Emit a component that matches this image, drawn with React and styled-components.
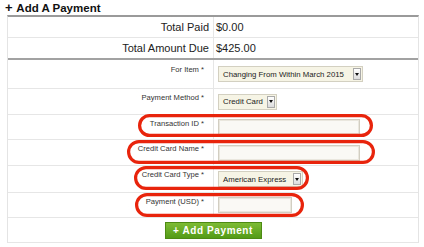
import React from 'react';
import styled, { createGlobalStyle } from 'styled-components';

const Global = createGlobalStyle`
  html, body { margin: 0; padding: 0; background: #fff; }
  body { font-family: "Liberation Sans", Arial, Helvetica, sans-serif; color: #222; }
`;

const Page = styled.div`
  position: relative;
  width: 424px;
  height: 247px;
  overflow: hidden;
`;

const Title = styled.h3`
  margin: 0;
  padding-left: 5px;
  height: 15px;
  font-size: 11.5px;
  font-weight: bold;
  line-height: 15px;
  color: #111;
`;

const Plus = styled.span`
  font-size: 13px;
  font-weight: 900;
  margin-right: 1px;
`;

const Panel = styled.div`
  margin-left: 7px;
  width: 412px;
  box-sizing: border-box;
  border-top: 2px solid #9a9a9a;
  border-left: 1px solid #e4e4e4;
  border-right: 1px solid #e4e4e4;
`;

const Row = styled.div`
  display: grid;
  grid-template-columns: 206px 1fr;
  height: ${p => p.h}px;
  box-sizing: border-box;
  border-bottom: ${p => (p.thick ? '2px solid #a2a2a2' : '1px solid #e6e6e6')};
`;

const TotalLabel = styled.div`
  box-sizing: border-box;
  border-right: 1px solid #e6e6e6;
  display: flex;
  align-items: center;
  justify-content: flex-end;
  padding-right: 4px;
  font-size: 11px;
  color: #222;
`;

const TotalValue = styled.div`
  display: flex;
  align-items: center;
  padding-left: 2px;
  font-size: 11px;
  color: #222;
`;

const Label = styled.div`
  box-sizing: border-box;
  border-right: 1px solid #e6e6e6;
  text-align: right;
  padding-right: 9px;
  padding-top: ${p => p.pt || 4}px;
  font-size: 7.6px;
  line-height: 9px;
  color: #333;
`;

const Value = styled.div`
  display: flex;
  align-items: center;
  padding-left: 4px;
`;

const Select = styled.div`
  display: inline-flex;
  align-items: center;
  box-sizing: border-box;
  width: ${p => p.w}px;
  height: 16px;
  border: 1px solid #d3d0c2;
  background: #f6f4e5;
  padding-left: 4px;
  font-size: 7.8px;
  color: #222;
  white-space: nowrap;
`;

const ArrowBox = styled.span`
  margin-left: auto;
  margin-right: 1px;
  flex: none;
  width: 8px;
  height: 12px;
  box-sizing: border-box;
  border: 1px solid #a9a9a9;
  background: linear-gradient(#ffffff, #dcdcdc);
  display: flex;
  align-items: center;
  justify-content: center;
  &::after {
    content: '';
    border-left: 2.5px solid transparent;
    border-right: 2.5px solid transparent;
    border-top: 3px solid #111;
  }
`;

const Input = styled.div`
  box-sizing: border-box;
  width: ${p => p.w}px;
  height: 16px;
  border: 1px solid #d2cfc2;
  box-shadow: inset 0 0 0 1px #e9e7de;
  background: #faf9f5;
`;

const ButtonCell = styled.div`
  grid-column: 1 / span 2;
  display: flex;
  align-items: center;
  justify-content: center;
`;

const AddButton = styled.button`
  box-sizing: border-box;
  width: 97px;
  height: 17px;
  padding: 0;
  margin: 0;
  border: 1px solid #4d8a14;
  background: linear-gradient(#7dbb34, #549b17);
  color: #fff;
  font-family: "Liberation Sans", Arial, sans-serif;
  font-weight: bold;
  font-size: 10px;
  letter-spacing: 0.6px;
  line-height: 15px;
  cursor: pointer;
`;

const Oval = styled.svg`
  position: absolute;
  left: ${p => p.x}px;
  top: ${p => p.y}px;
  overflow: visible;
  pointer-events: none;
`;

function Mark({ x, y, w, h }) {
  return (
    <Oval x={x} y={y} width={w} height={h}>
      <rect x="1.6" y="1.6" width={w - 3.2} height={h - 3.2} rx={(h - 3.2) / 2} ry={(h - 3.2) / 2}
        fill="none" stroke="#e8240c" strokeWidth="3.2" />
    </Oval>
  );
}

function Dropdown({ w, children }) {
  return (
    <Select w={w}>
      {children}
      <ArrowBox />
    </Select>
  );
}

export default function App() {
  return (
    <Page>
      <Global />
      <Title><Plus>+</Plus> Add A Payment</Title>
      <Panel>
        <Row h={21}>
          <TotalLabel>Total Paid</TotalLabel>
          <TotalValue>$0.00</TotalValue>
        </Row>
        <Row h={22} thick>
          <TotalLabel>Total Amount Due</TotalLabel>
          <TotalValue>$425.00</TotalValue>
        </Row>
        <Row h={29}>
          <Label pt={5}>For Item *</Label>
          <Value><Dropdown w={145}>Changing From Within March 2015</Dropdown></Value>
        </Row>
        <Row h={26}>
          <Label>Payment Method *</Label>
          <Value><Dropdown w={59}>Credit Card</Dropdown></Value>
        </Row>
        <Row h={25}>
          <Label>Transaction ID *</Label>
          <Value><Input w={142} /></Value>
        </Row>
        <Row h={26}>
          <Label>Credit Card Name *</Label>
          <Value><Input w={142} /></Value>
        </Row>
        <Row h={27}>
          <Label>Credit Card Type *</Label>
          <Value><Dropdown w={85}>American Express</Dropdown></Value>
        </Row>
        <Row h={25}>
          <Label>Payment (USD) *</Label>
          <Value><Input w={74} /></Value>
        </Row>
        <Row h={25}>
          <ButtonCell><AddButton>+ Add Payment</AddButton></ButtonCell>
        </Row>
      </Panel>
      <Mark x={138} y={114} w={235} h={23} />
      <Mark x={127} y={140} w={248} h={24} />
      <Mark x={134} y={166} w={175} h={24} />
      <Mark x={135} y={193} w={169} h={24} />
    </Page>
  );
}
